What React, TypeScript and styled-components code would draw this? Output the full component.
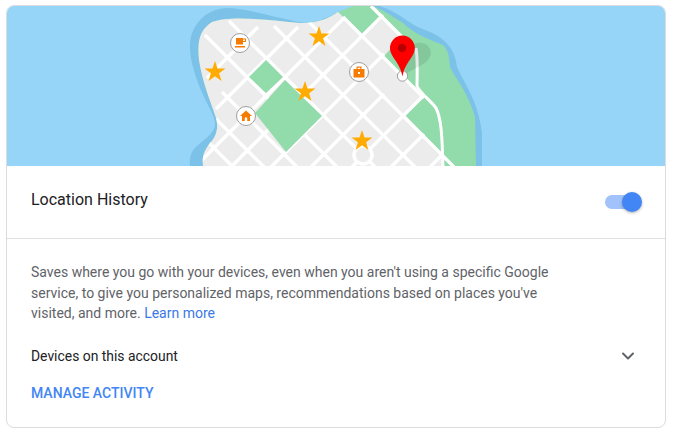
import React from "react";
import styled, { createGlobalStyle } from "styled-components";
import { ChevronDown } from "lucide-react";

const Global = createGlobalStyle`
	html, body { margin: 0; padding: 0; background: #fff; }
	body { font-family: Roboto, "Liberation Sans", sans-serif; }
`;

const Page = styled.div`
	width: 673px;
	height: 432px;
	box-sizing: border-box;
	padding: 5px 7px 0 6px;
`;

const Card = styled.section`
	box-sizing: border-box;
	height: 423px;
	border: 1px solid #dadce0;
	border-radius: 8px;
	overflow: hidden;
`;

const MapArt = styled.svg`
	display: block;
	width: 658px;
	height: 160px;
`;

const Header = styled.div`
	display: flex;
	align-items: center;
	justify-content: space-between;
	height: 72px;
	padding: 0 26px 0 24px;
	border-bottom: 1px solid #e0e0e0;
`;

const Title = styled.h2`
	margin: 0 0 6px;
	font-size: 16px;
	font-weight: 400;
	color: #202124;
`;

const Toggle = styled.div`
	position: relative;
	width: 34px;
	height: 14px;
	border-radius: 7px;
	background: #a1c2fa;
`;

const Knob = styled.span`
	position: absolute;
	right: -3px;
	top: -3px;
	width: 20px;
	height: 20px;
	border-radius: 50%;
	background: #4285f4;
	box-shadow: 0 1px 3px rgba(0, 0, 0, 0.3);
`;

const Body = styled.div`
	padding: 23px 24px 0;
`;

const Description = styled.p`
	margin: 0;
	max-width: 530px;
	font-size: 14px;
	line-height: 20.5px;
	color: #5f6368;
`;

const Learn = styled.a`
	color: #3b78e7;
	text-decoration: none;
`;

const Devices = styled.div`
	display: flex;
	align-items: center;
	justify-content: space-between;
	margin-top: 22px;
	padding-right: 3px;
	font-size: 13.9px;
	color: #202124;
`;

const Manage = styled.a`
	display: block;
	margin-top: 19px;
	font-size: 14px;
	font-weight: 500;
	color: #4285f4;
`;

const starPoints = (() => {
	const pts: string[] = [];
	for (let i = 0; i < 10; i++) {
		const r = i % 2 ? 4.3 : 11;
		const a = (Math.PI / 5) * i - Math.PI / 2;
		pts.push(`${(r * Math.cos(a)).toFixed(2)},${(r * Math.sin(a)).toFixed(2)}`);
	}
	return pts.join(" ");
})();

const Star = ({ x, y }: { x: number; y: number }) => (
	<polygon transform={`translate(${x} ${y})`} fill="#ffab00" points={starPoints} />
);

const shoreEdge = "M203 166 C202 156 204 151 210 143 C218 135 218 125 216 118 C212 105 203 85 199 60 C197 40 200 30 212 22 C230 15 270 20 300 23 C315 24 330 18 338 12";
const islandPath = `${shoreEdge} L353 6 L373 6 C385 11 395 18 403 23 C412 32 423 37 443 45 C450 52 449 60 450 67 C455 78 468 92 475 117 L476 166 Z`;
const townPath = `${shoreEdge} L363 36 L382 18 L402 37 L383 57 L402 75 L422 97 L405 115 L442 153 L444 166 Z`;

// roads running down-right: y = x + c
const downRoads: [number, number, number][] = [
	[-66, 203, 232], [-97, 216, 265], [-130, 222, 298], [-170, 205, 338],
	[-208, 229, 376], [-248, 274, 416], [-287, 309, 455], [-326, 343, 424],
	[-365, 371, 403],
];

// roads running down-left: y = s - x
const upRoads: [number, number, number][] = [
	[285, 258, 207], [325, 298, 216], [362, 344, 198], [398, 383, 232],
	[438, 384, 270], [478, 384, 310], [519, 423, 351], [558, 424, 391], [597, 443, 430],
];

const roadPaths = [
	...downRoads.map(([c, a, b]) => `M${a} ${a + c} L${b} ${b + c}`),
	...upRoads.map(([s, a, b]) => `M${a} ${s - a} L${b} ${s - b}`),
];

const Poi = ({ x, y, children }: { x: number; y: number; children: React.ReactNode }) => (
	<g transform={`translate(${x} ${y})`}>
		<circle r="9.5" fill="#fff" stroke="#9e9e9e" strokeWidth="1" />
		{children}
	</g>
);

const Pin = () => (
	<g>
		<path d="M403 76 C408 68 405 60 409 50 C412 42 424 40 429 47 C434 55 428 62 420 66 C414 69 408 72 403 76 Z" fill="#000" opacity="0.09" />
		<circle cx="402.5" cy="76" r="5.2" fill="#fff" stroke="#9e9e9e" strokeWidth="1" />
		<path d="M402.5 76.5 C400 62 390 57 390 48 A12.4 12.4 0 0 1 414.8 48 C414.8 57 405 62 402.5 76.5 Z" fill="#f00" />
		<circle cx="402" cy="48" r="4.2" fill="#b80000" />
	</g>
);

const App = () => (
	<>
		<Global />
		<Page>
			<Card>
				<MapArt viewBox="7 6 658 160">
					<defs>
						<clipPath id="island"><path d={islandPath} /></clipPath>
					</defs>
					<rect x="7" y="6" width="658" height="160" fill="#96d5f8" />
					<path d="M190 166 C189 156 192 150 198 145 C208 137 216 131 215 122 C213 112 204 100 197 80 C190 60 188 45 192 33 C198 18 210 9 226 8 C250 8 280 20 307 23 C325 22 345 6 360 6 L380 6 C400 13 410 25 425 30 C447 38 455 50 457 67 C465 85 478 100 482 133 L482 166 Z" fill="#7cc1e8" />
					<path d={islandPath} fill="#92dbab" />
					<path d={townPath} fill="#ececec" />
					<g stroke="#fff" strokeWidth="3.4" fill="none" clipPath="url(#island)">
						{roadPaths.map(d => <path key={d} d={d} />)}
						<path d="M416 48 C418 60 417 75 417 86 C420 93 430 100 436 108 C442 120 442 140 443 166" strokeWidth="3" />
					</g>
					<polygon points="249,77 266,60 283,77 266,93" fill="#92dbab" />
					<polygon points="255,113 285,80 322,116 286,152" fill="#92dbab" />
					<circle cx="363" cy="155" r="9" fill="#ececec" stroke="#fff" strokeWidth="3.5" />
					<Star x={319} y={37} />
					<Star x={215} y={72} />
					<Star x={305} y={92} />
					<Star x={362} y={141} />
					<Poi x={240} y={43}>
						<path d="M-4 -5 H3 V1.5 H-4 Z M3 -4.5 H6 V-1 H3 V-2 H5 V-3.5 H3 Z M-5 3 H5 V4.5 H-5 Z" fill="#f57c00" />
					</Poi>
					<Poi x={246} y={116}>
						<path d="M0 -5.5 L6 0 H4 V5 H1.2 V1.5 H-1.2 V5 H-4 V0 H-6 Z" fill="#f57c00" />
					</Poi>
					<Poi x={359} y={72}>
						<path fillRule="evenodd" d="M-5.5 -3 H-2.5 V-5.5 H2.5 V-3 H5.5 V5.5 H-5.5 Z M-1.3 -4.3 V-3 H1.3 V-4.3 Z M-1 0 V2 H1 V0 Z" fill="#f57c00" />
					</Poi>
					<Pin />
				</MapArt>
				<Header>
					<Title>Location History</Title>
					<Toggle><Knob /></Toggle>
				</Header>
				<Body>
					<Description>
						Saves where you go with your devices, even when you aren't using a specific Google service, to give you personalized maps, recommendations based on places you've visited, and more. <Learn>Learn more</Learn>
					</Description>
					<Devices>
						Devices on this account
						<ChevronDown size={20} color="#5f6368" strokeWidth={2.4} />
					</Devices>
					<Manage>MANAGE ACTIVITY</Manage>
				</Body>
			</Card>
		</Page>
	</>
);

export default App;
